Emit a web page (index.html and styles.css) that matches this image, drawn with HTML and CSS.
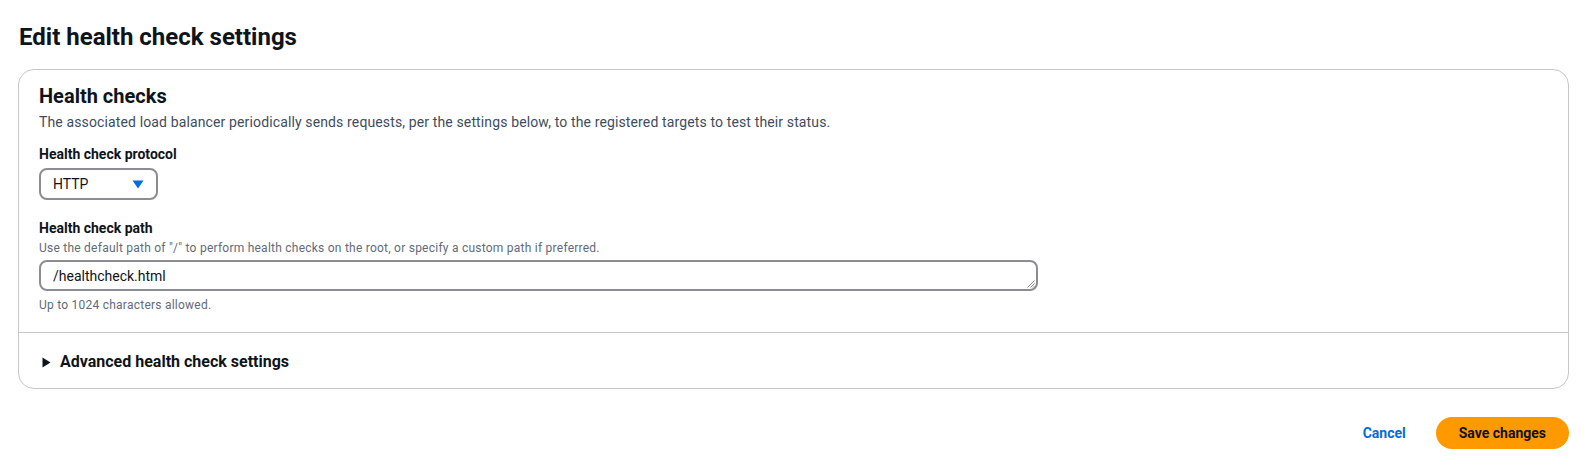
FILE: index.html
```html
<!DOCTYPE html>
<html lang="en">
<head>
<meta charset="utf-8">
<title>Edit health check settings</title>
<link rel="stylesheet" href="styles.css">
</head>
<body>
<main class="page">
  <h1 class="page-title">Edit health check settings</h1>
  <section class="card">
    <div class="card-body">
      <h2 class="card-title">Health checks</h2>
      <p class="card-desc">The associated load balancer periodically sends requests, per the settings below, to the registered targets to test their status.</p>

      <div class="field">
        <label class="field-label">Health check protocol</label>
        <div class="select">
          <span class="select-value">HTTP</span>
          <svg class="select-caret" width="12" height="9" viewBox="0 0 12 9"><polygon points="0.5,0.5 11.5,0.5 6,8.5" fill="#006ce0"/></svg>
        </div>
      </div>

      <div class="field field-path">
        <label class="field-label">Health check path</label>
        <div class="field-desc">Use the default path of "/" to perform health checks on the root, or specify a custom path if preferred.</div>
        <div class="textarea">
          <span class="textarea-value">/healthcheck.html</span>
          <svg class="resize" width="8" height="8" viewBox="0 0 8 8"><path d="M7.5 0.5 L0.5 7.5 M7.5 3.5 L3.5 7.5 M7.5 6 L6 7.5" stroke="#8c8c94" stroke-width="1"/></svg>
        </div>
        <div class="field-hint">Up to 1024 characters allowed.</div>
      </div>
    </div>
    <div class="card-expander">
      <svg class="expander-caret" width="9" height="11" viewBox="0 0 9 11"><polygon points="0.5,0.5 8.5,5.5 0.5,10.5" fill="#0f141a"/></svg>
      <span class="expander-label">Advanced health check settings</span>
    </div>
  </section>
  <div class="actions">
    <a class="link-btn" href="#">Cancel</a>
    <button class="primary-btn" type="button">Save changes</button>
  </div>
</main>
</body>
</html>
```

FILE: styles.css
```css
* { box-sizing: border-box; }
html, body { margin: 0; padding: 0; background: #ffffff; }
body {
  font-family: Roboto, "Noto Sans", Arial, sans-serif;
  color: #0f141a;
  font-size: 14px;
}
.page {
  padding: 22px 22px 0 18px;
}
.page-title {
  margin: 0 0 0 1px;
  font-size: 24px;
  line-height: 30px;
  font-weight: 700;
  color: #0f141a;
}
.card {
  margin-top: 17px;
  border: 1px solid #c6c6cd;
  border-radius: 16px;
  background: #fff;
}
.card-body {
  padding: 14px 20px 19px 20px;
}
.card-title {
  margin: 0;
  font-size: 20px;
  line-height: 24px;
  font-weight: 700;
}
.card-desc {
  margin: 4px 0 0;
  font-size: 14px;
  line-height: 20px;
  letter-spacing: 0.13px;
  color: #414d5c;
}
.field { margin-top: 12px; }
.field-label {
  display: block;
  font-size: 14px;
  font-weight: 700;
  line-height: 20px;
}
.select {
  margin-top: 4px;
  width: 119px;
  height: 32px;
  border: 2px solid #8c8c94;
  border-radius: 8px;
  display: flex;
  align-items: center;
  justify-content: space-between;
  padding: 0 12px 0 12px;
}
.select-value { font-size: 14px; }
.field-path { margin-top: 18px; }
.field-path .field-desc { margin-top: 2px; }
.field-desc {
  font-size: 12px;
  line-height: 16px;
  letter-spacing: 0.24px;
  color: #5f6b7a;
}
.textarea {
  position: relative;
  margin-top: 4px;
  width: 999px;
  height: 31px;
  border: 2px solid #8c8c94;
  border-radius: 8px;
  padding: 4px 12px;
  display: flex;
  align-items: center;
}
.textarea-value { font-size: 14px; }
.resize {
  position: absolute;
  right: 1px;
  bottom: 1px;
}
.field-hint {
  margin-top: 6px;
  font-size: 12px;
  line-height: 16px;
  letter-spacing: 0.24px;
  color: #5f6b7a;
}
.card-expander {
  border-top: 1px solid #c6c6cd;
  padding: 18px 20px 15px 23px;
  display: flex;
  align-items: center;
  gap: 9px;
}
.expander-label {
  font-size: 16px;
  font-weight: 700;
  line-height: 22px;
}
.actions {
  margin-top: 28px;
  display: flex;
  justify-content: flex-end;
  align-items: center;
  gap: 30px;
}
.link-btn {
  color: #006ce0;
  font-weight: 700;
  font-size: 14px;
  text-decoration: none;
}
.primary-btn {
  font-family: inherit;
  background: #ff9900;
  color: #0f141a;
  border: none;
  border-radius: 16px;
  height: 32px;
  padding: 0 23px;
  font-size: 14px;
  font-weight: 700;
}
```
